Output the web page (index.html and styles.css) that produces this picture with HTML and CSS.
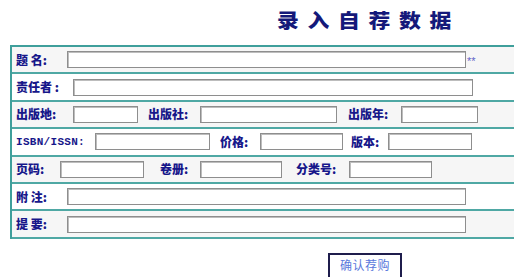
FILE: index.html
```html
<!DOCTYPE html>
<html lang="zh-CN">
<head>
  <meta charset="utf-8">
  <title>录入自荐数据</title>
  <link rel="stylesheet" href="styles.css">
</head>
<body>
  <div class="page">
    <h1 class="page-title"><span class="page-title-text">录入自荐数据</span></h1>

    <form class="form">
      <div class="row row-grey">
        <label class="lbl lbl-title">题 名:</label>
        <input class="field field-title" type="text">
        <span class="required">**</span>
      </div>

      <div class="row">
        <label class="lbl lbl-author">责任者 :</label>
        <input class="field field-author" type="text">
      </div>

      <div class="row row-grey">
        <label class="lbl lbl-place">出版地:</label>
        <input class="field field-place" type="text">
        <label class="lbl lbl-publisher">出版社:</label>
        <input class="field field-publisher" type="text">
        <label class="lbl lbl-year">出版年:</label>
        <input class="field field-year" type="text">
      </div>

      <div class="row">
        <label class="lbl lbl-isbn">ISBN/ISSN:</label>
        <input class="field field-isbn" type="text">
        <label class="lbl lbl-price">价格:</label>
        <input class="field field-price" type="text">
        <label class="lbl lbl-edition">版本:</label>
        <input class="field field-edition" type="text">
      </div>

      <div class="row row-grey">
        <label class="lbl lbl-pages">页码:</label>
        <input class="field field-pages" type="text">
        <label class="lbl lbl-volume">卷册:</label>
        <input class="field field-volume" type="text">
        <label class="lbl lbl-class">分类号:</label>
        <input class="field field-class" type="text">
      </div>

      <div class="row">
        <label class="lbl lbl-title">附 注:</label>
        <input class="field field-title" type="text">
      </div>

      <div class="row row-grey">
        <label class="lbl lbl-title">提 要:</label>
        <input class="field field-title" type="text">
      </div>
    </form>

    <div class="actions">
      <button class="submit" type="button">确认荐购</button>
    </div>
  </div>
</body>
</html>
```

FILE: styles.css
```css
* {
  margin: 0;
  padding: 0;
  box-sizing: border-box;
}

html, body {
  overflow: hidden;
}

body {
  background-color: #FFFFFF;
  font-family: "Noto Sans CJK SC", "Noto Sans", sans-serif;
}

.page {
  padding: 10px 0 0 10px;
  width: 530px;
}

.page-title {
  height: 35px;
  padding-left: 267px;
  color: #14197A;
  font-size: 19px;
  font-weight: 900;
  line-height: 20px;
}

.page-title-text {
  display: inline-block;
  letter-spacing: 7.5px;
  transform: scaleX(1.15);
  transform-origin: left center;
}

.form {
  width: 520px;
  border-top: 2px solid #3F9F9B;
  border-left: 2px solid #3F9F9B;
}

.row {
  display: flex;
  align-items: center;
  height: 27.4px;
  border-bottom: 2px solid #4FA8A4;
  background-color: #FFFFFF;
}

.row-grey {
  background-color: #F6F6F6;
}

.lbl {
  flex: none;
  color: #17178A;
  font-size: 12px;
  font-weight: 900;
  line-height: 14px;
  white-space: nowrap;
}

.lbl-title { width: 55px; padding-left: 4px; }
.lbl-author { width: 61px; padding-left: 4px; }
.lbl-place { width: 61px; padding-left: 4px; }
.lbl-publisher { width: 62px; padding-left: 10px; }
.lbl-year { width: 64px; padding-left: 11px; }
.lbl-isbn { width: 83px; padding-left: 4px; font-family: "Liberation Mono", monospace; font-size: 11px; font-weight: 700; letter-spacing: 0.3px; }
.lbl-price { width: 50px; padding-left: 10px; }
.lbl-edition { width: 45px; padding-left: 8px; }
.lbl-pages { width: 48px; padding-left: 4px; }
.lbl-volume { width: 56px; padding-left: 16px; }
.lbl-class { width: 67px; padding-left: 14px; }

.field {
  flex: none;
  height: 17px;
  border: 1px solid #8E8E8E;
  box-shadow: inset 1px 1px 0 #BDBDBD;
  background-color: #FFFFFF;
  outline: none;
}

.field-title { width: 399px; }
.field-author { width: 400px; }
.field-place { width: 65px; }
.field-publisher { width: 137px; }
.field-year { width: 77px; }
.field-isbn { width: 115px; }
.field-price { width: 83px; }
.field-edition { width: 84px; }
.field-pages { width: 84px; }
.field-volume { width: 82px; }
.field-class { width: 83px; }

.required {
  padding: 3px 0 0 1px;
  color: #6464C8;
  font-family: "Liberation Sans", sans-serif;
  font-size: 11px;
}

.actions {
  padding: 12px 0 0 318px;
}

.submit {
  width: 74px;
  height: 30px;
  padding-bottom: 8px;
  border: 2px solid #1F1D4C;
  background-color: #FFFFFF;
  color: #5A78DC;
  font-family: "Noto Sans CJK SC", sans-serif;
  font-size: 12px;
  letter-spacing: 0.5px;
}
```
